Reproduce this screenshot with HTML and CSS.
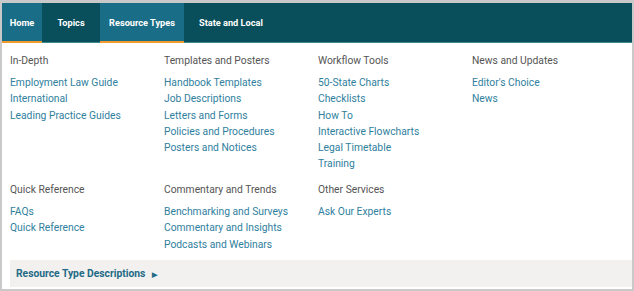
FILE: index.html
```html
<!DOCTYPE html>
<html lang="en">
<head>
    <meta charset="UTF-8">
    <title>Resource Types</title>
    <link rel="stylesheet" href="styles.css">
</head>
<body>

<div class="frame">
    <nav class="topnav">
        <a class="tab active home" href="#">Home</a>
        <a class="tab topics" href="#">Topics</a>
        <a class="tab active types" href="#">Resource Types</a>
        <a class="tab state" href="#">State and Local</a>
    </nav>

    <div class="menu">
        <div class="group">
            <h4>In-Depth</h4>
            <a href="#">Employment Law Guide</a>
            <a href="#">International</a>
            <a href="#">Leading Practice Guides</a>
        </div>
        <div class="group">
            <h4>Templates and Posters</h4>
            <a href="#">Handbook Templates</a>
            <a href="#">Job Descriptions</a>
            <a href="#">Letters and Forms</a>
            <a href="#">Policies and Procedures</a>
            <a href="#">Posters and Notices</a>
        </div>
        <div class="group">
            <h4>Workflow Tools</h4>
            <a href="#">50-State Charts</a>
            <a href="#">Checklists</a>
            <a href="#">How To</a>
            <a href="#">Interactive Flowcharts</a>
            <a href="#">Legal Timetable</a>
            <a href="#">Training</a>
        </div>
        <div class="group">
            <h4>News and Updates</h4>
            <a href="#">Editor's Choice</a>
            <a href="#">News</a>
        </div>

        <div class="group">
            <h4>Quick Reference</h4>
            <a href="#">FAQs</a>
            <a href="#">Quick Reference</a>
        </div>
        <div class="group">
            <h4>Commentary and Trends</h4>
            <a href="#">Benchmarking and Surveys</a>
            <a href="#">Commentary and Insights</a>
            <a href="#">Podcasts and Webinars</a>
        </div>
        <div class="group">
            <h4>Other Services</h4>
            <a href="#">Ask Our Experts</a>
        </div>
    </div>

    <div class="descriptions">
        <a href="#">Resource Type Descriptions <span class="arrow">&#9654;</span></a>
    </div>
</div>

</body>
</html>
```

FILE: styles.css
```css
body {
    margin: 0;
    padding: 0;
    font-family: Roboto, 'Liberation Sans', sans-serif;
    background: #fff;
}

.frame {
    width: 630px;
    height: 286px;
    border: 2px solid #c9c9c9;
    border-top-width: 3px;
    box-sizing: content-box;
    display: flex;
    flex-direction: column;
}

.topnav {
    display: flex;
    height: 39px;
    background-color: #084e5b;
    border-bottom: 1px solid #3d8a92;
}

.tab {
    display: flex;
    align-items: center;
    justify-content: center;
    color: #fff;
    font-size: 9.2px;
    font-weight: 700;
    text-decoration: none;
    border-bottom: 2px solid transparent;
    margin-bottom: -1px;
    box-sizing: border-box;
}

.home { width: 40px; }
.topics { width: 58px; }
.types { width: 84px; }
.state { padding-left: 15px; }

.tab.active {
    background-color: #1a6d86;
    border-bottom-color: #f39a2d;
}

.menu {
    display: grid;
    grid-template-columns: repeat(4, 154px);
    padding: 10px 0 0 8px;
}

.group {
    display: flex;
    flex-direction: column;
    height: 129px;
}

.group:nth-child(n+5) {
    height: 73px;
}

.group h4 {
    margin: 0 0 6px;
    font-size: 10.3px;
    font-weight: 400;
    line-height: 16px;
    color: #555;
}

.group a {
    font-size: 10.3px;
    line-height: 16.3px;
    color: #2f7f9e;
    text-decoration: none;
}

.descriptions {
    margin: 5px 0 0 8px;
    height: 27px;
    background-color: #f2f1ef;
    display: flex;
    align-items: center;
    padding-left: 6px;
}

.descriptions a {
    color: #1f6a86;
    font-size: 10.3px;
    font-weight: 700;
    text-decoration: none;
}

.arrow {
    font-size: 7px;
    margin-left: 4px;
}
```
